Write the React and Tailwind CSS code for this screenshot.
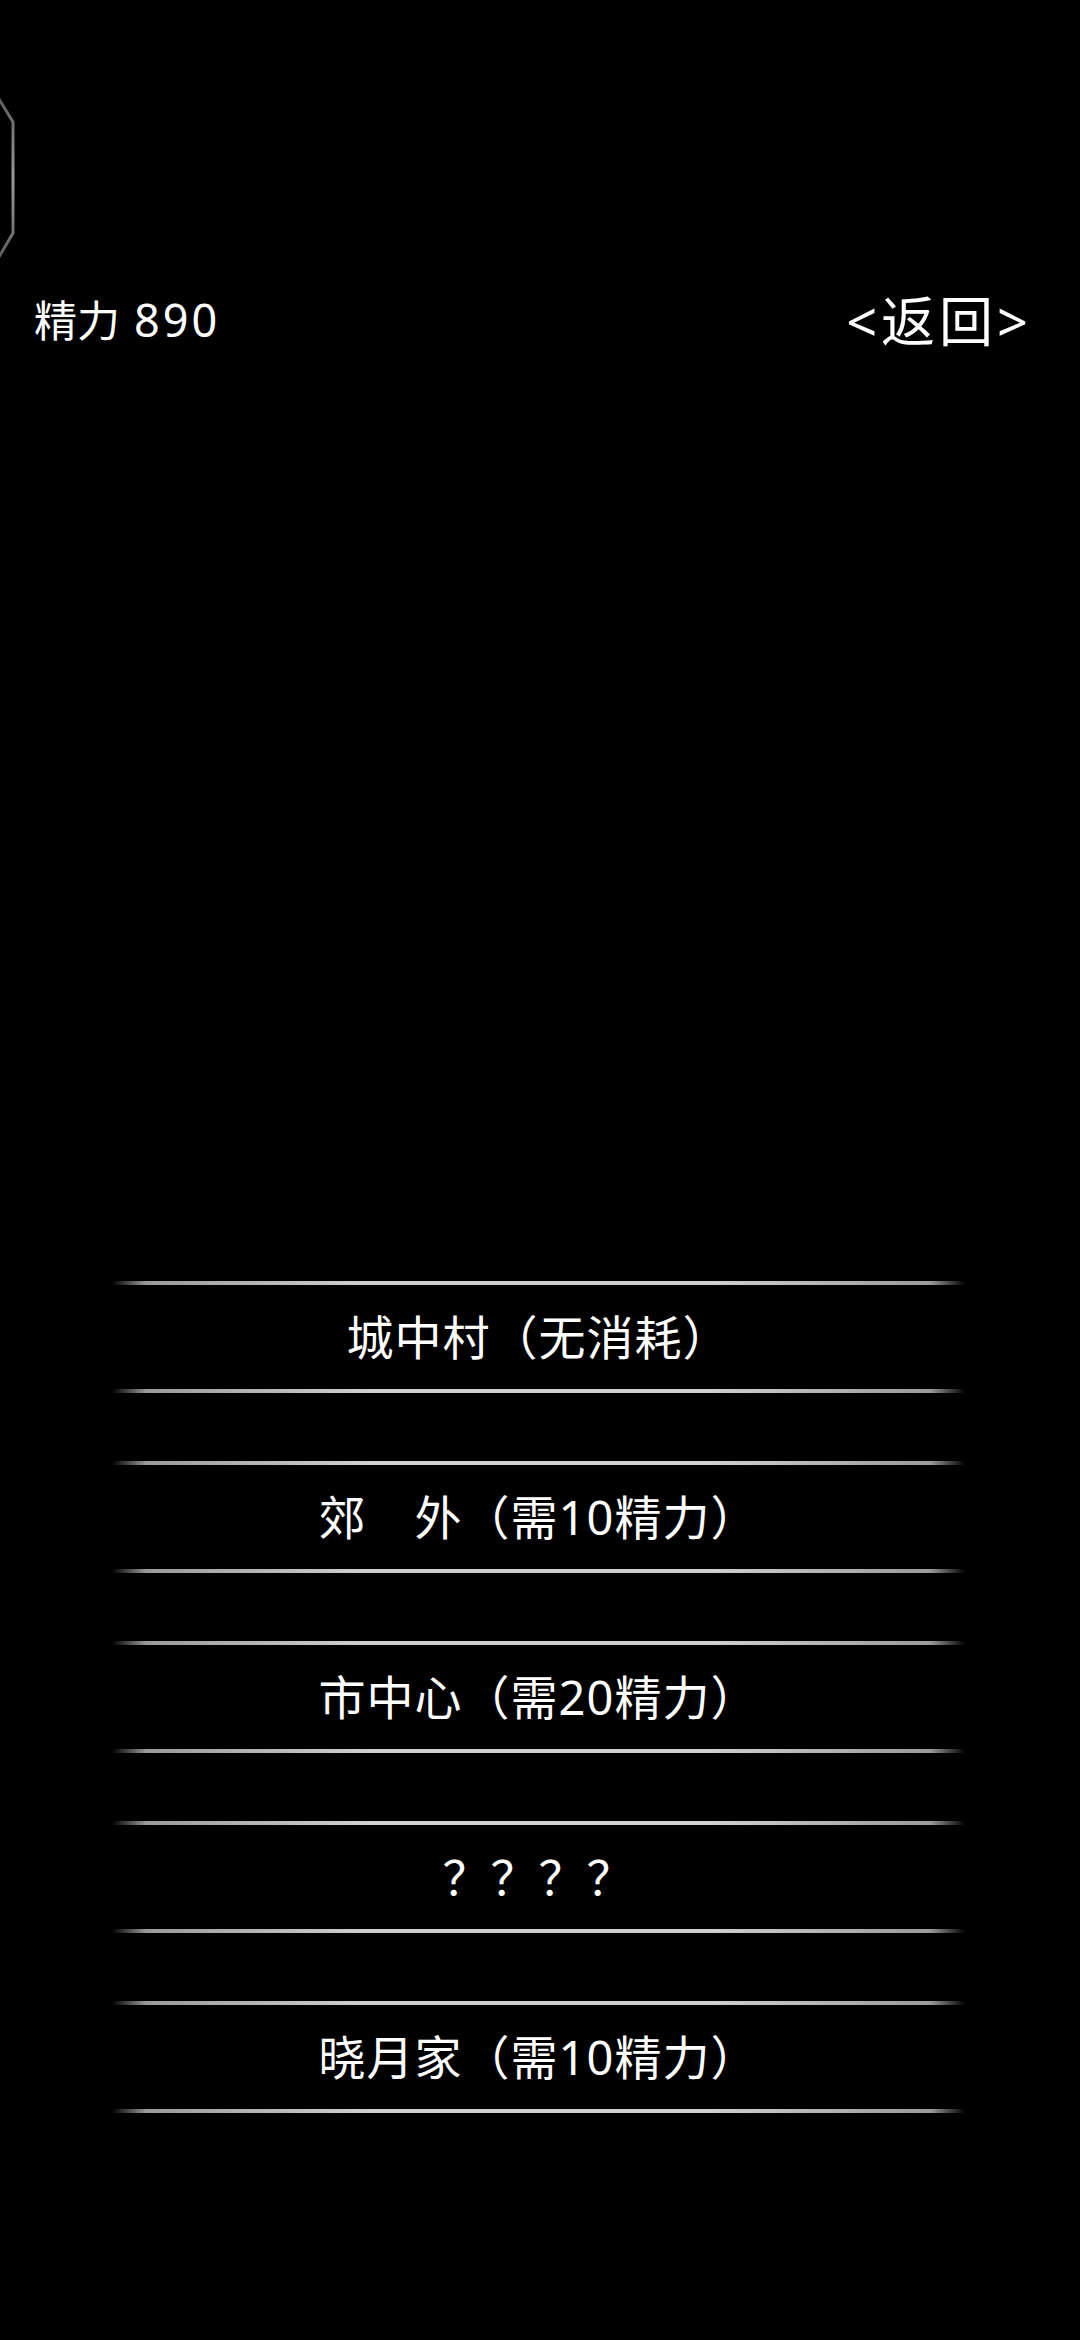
const places = [
  '城中村（无消耗）',
  '郊　外（需10精力）',
  '市中心（需20精力）',
  '？？？？',
  '晓月家（需10精力）',
]

const Line = () => (
  <div className="h-[4px] w-full bg-[linear-gradient(90deg,transparent,#9a9a9a_4%,#d0d0d0_30%,#d0d0d0_70%,#9a9a9a_96%,transparent)]" />
)

const App = () => {
  return (
    <div
      className="relative min-h-[2340px] w-[1080px] bg-black text-white"
      style={{ fontFamily: '"Noto Sans", "Noto Sans CJK SC", sans-serif' }}
    >
      {/* avatar frame cut off at the edge */}
      <svg
        className="absolute left-0 top-[90px]"
        width="24"
        height="180"
        viewBox="0 0 24 180"
      >
        <defs>
          <linearGradient id="frame" x1="0" y1="0" x2="0" y2="1">
            <stop offset="0" stopColor="#5a5a5a" />
            <stop offset="0.5" stopColor="#9a9a9a" />
            <stop offset="1" stopColor="#5a5a5a" />
          </linearGradient>
        </defs>
        <polyline
          points="-4,4 13,32 13,143 -4,172"
          fill="none"
          stroke="url(#frame)"
          strokeWidth="3"
        />
      </svg>

      <div className="flex items-center justify-between pl-[34px] pr-[48px] pt-[288px]">
        <span className="text-[43px] leading-[64px]">
          精力<span className="ml-[14px] text-[45px] tracking-[3px]">890</span>
        </span>
        <span className="text-[54px] leading-[64px] tracking-[4px]">&lt;返回&gt;</span>
      </div>

      <div className="ml-[112px] mt-[928px] flex w-[853px] flex-col gap-[68px]">
        {places.map((p) => (
          <button key={p} type="button" className="flex flex-col text-white">
            <Line />
            <div className="flex h-[104px] items-center justify-center text-[47px] tracking-[1px]">
              {p}
            </div>
            <Line />
          </button>
        ))}
      </div>
    </div>
  )
}

export default App
